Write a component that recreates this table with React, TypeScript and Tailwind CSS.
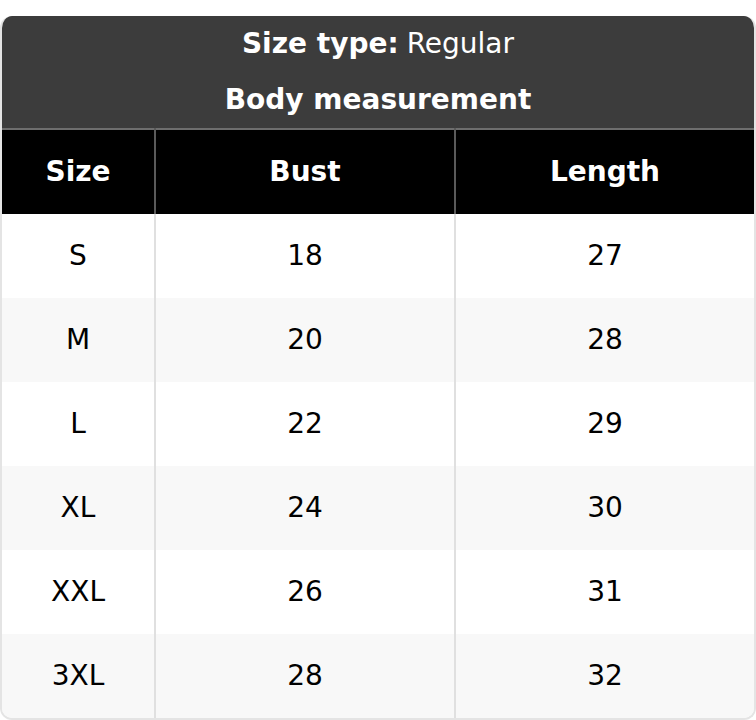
const ROWS = [
  ["S", "18", "27"],
  ["M", "20", "28"],
  ["L", "22", "29"],
  ["XL", "24", "30"],
  ["XXL", "26", "31"],
  ["3XL", "28", "32"],
];

export default function App() {
  return (
    <div className="bg-white pt-4 font-['DejaVu_Sans',sans-serif]">
      <div className="overflow-hidden rounded-xl border-2 border-t-0 border-[#e4e4e4]">
        {/* Title */}
        <div className="bg-[#3c3c3c] text-[28px] text-white">
          <div className="flex h-[56px] items-center justify-center">
            <span className="font-bold">Size type:</span>
            <span className="ml-2">Regular</span>
          </div>
          <div className="flex h-[56px] items-center justify-center font-bold">Body measurement</div>
        </div>
        <table className="w-full border-collapse text-center text-[28px]">
          <thead>
            <tr className="h-[85px] border-t-2 border-[#6e6e6e] bg-black font-bold text-white">
              <th className="w-[153px] border-r-2 border-[#5a5a5a]">Size</th>
              <th className="w-[300px] border-r-2 border-[#5a5a5a]">Bust</th>
              <th>Length</th>
            </tr>
          </thead>
          <tbody className="text-black">
            {ROWS.map((r, i) => (
              <tr key={r[0]} className={`h-[84px] ${i % 2 ? "bg-[#f8f8f8]" : "bg-white"}`}>
                <td className="border-r-2 border-[#e0e0e0]">{r[0]}</td>
                <td className="border-r-2 border-[#e0e0e0]">{r[1]}</td>
                <td>{r[2]}</td>
              </tr>
            ))}
          </tbody>
        </table>
      </div>
    </div>
  );
}
